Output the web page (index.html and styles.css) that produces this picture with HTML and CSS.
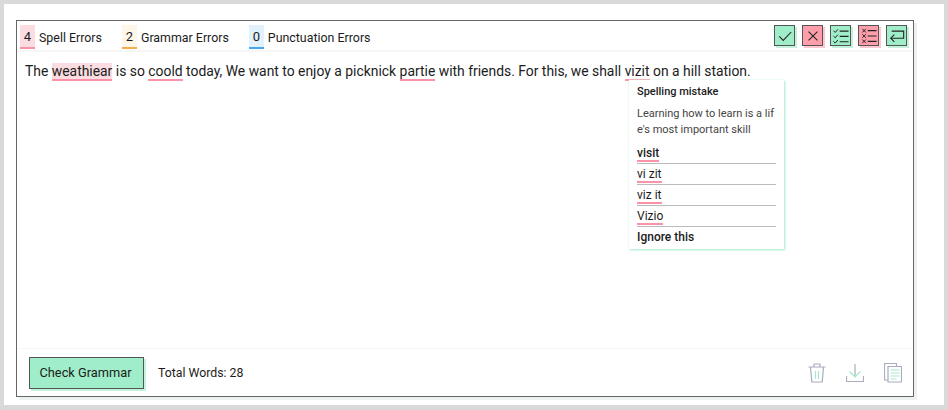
FILE: index.html
```html
<!DOCTYPE html>
<html lang="en">
<head>
<meta charset="utf-8">
<title>Grammar checker</title>
<link rel="stylesheet" href="styles.css">
</head>
<body>
<div class="frame">
  <div class="card">
    <header class="top">
      <div class="stats">
        <div class="stat"><span class="count spell">4</span><span>Spell Errors</span></div>
        <div class="stat"><span class="count grammar">2</span><span>Grammar Errors</span></div>
        <div class="stat"><span class="count punct">0</span><span>Punctuation Errors</span></div>
      </div>
      <div class="tools">
        <button class="tool ok" aria-label="Accept"><svg viewBox="0 0 18 18"><path d="M2.500 9.500l4.500 4.500L16 4.500" fill="none" stroke="#222" stroke-width="1.200"/></svg></button>
        <button class="tool bad" aria-label="Reject"><svg viewBox="0 0 18 18"><path d="M4 4l10 10M14 4L4 14" fill="none" stroke="#222" stroke-width="1.200"/></svg></button>
        <button class="tool ok" aria-label="Accept all"><svg viewBox="0 0 18 18"><path d="M0.500 3l2 2 3-3.500M0.500 9l2 2 3-3.500M0.500 15l2 2 3-3.500" fill="none" stroke="#222" stroke-width="1.100"/><path d="M7.500 3.500h10M7.500 9.500h10M7.500 15.500h10" fill="none" stroke="#222" stroke-width="1.300"/></svg></button>
        <button class="tool bad" aria-label="Reject all"><svg viewBox="0 0 18 18"><path d="M1.500 1l4 4M5.500 1l-4 4M1.500 7l4 4M5.500 7l-4 4M1.500 13l4 4M5.500 13l-4 4" fill="none" stroke="#222" stroke-width="1.100"/><path d="M7.500 3h10M7.500 9h10M7.500 15h10" fill="none" stroke="#222" stroke-width="1.300"/></svg></button>
        <button class="tool ok" aria-label="Undo"><svg viewBox="0 0 18 18"><path d="M3 3.500h13.500v8H2" fill="none" stroke="#222" stroke-width="1.200"/><path d="M6 7.500l-4 4L6 15.500" fill="none" stroke="#222" stroke-width="1.200"/></svg></button>
      </div>
    </header>
    <main class="editor">
      <p class="text">The <span class="err fill">weathiear</span> is so <span class="err">coold</span> today, We want to enjoy a picknick <span class="err">partie</span> with friends. For this, we shall <span class="err">vizit</span> on a hill station.</p>
      <div class="popup">
        <div class="pop-title">Spelling mistake</div>
        <div class="pop-desc">Learning how to learn is a lif<br>e's most important skill</div>
        <div class="opt first"><span class="err">visit</span></div>
        <div class="opt"><span class="err">vi zit</span></div>
        <div class="opt"><span class="err">viz it</span></div>
        <div class="opt"><span class="err">Vizio</span></div>
        <div class="opt ignore">Ignore this</div>
      </div>
    </main>
    <footer class="bottom">
      <button class="check">Check Grammar</button>
      <span class="words">Total Words: 28</span>
      <div class="actions">
        <svg width="18" height="20" viewBox="0 0 18 20" fill="none"><path d="M0.500 4h17M6 4V1h6v3M2.500 4l1.300 15h10.400L15.500 4" stroke="#a9adbd" stroke-width="1.200"/><path d="M7.500 8v8M10.500 8v8" stroke="#a3e9c8" stroke-width="1.200"/></svg>
        <svg width="18" height="20" viewBox="0 0 18 20" fill="none"><path d="M9 1v13" stroke="#a9adbd" stroke-width="1.200"/><path d="M3.500 8.500L9 14l5.500-5.500" stroke="#a3e9c8" stroke-width="1.200"/><path d="M0.500 13v5.500h17V13" stroke="#a9adbd" stroke-width="1.200"/></svg>
        <svg width="18" height="20" viewBox="0 0 18 20" fill="none"><path d="M4 17H.5V.5h12V4" stroke="#a9adbd" stroke-width="1.200"/><path d="M4 3.500h13.500v15.500H4z" stroke="#a9adbd" stroke-width="1.200"/><path d="M6.500 7h9M6.500 10h9M6.500 13h9M6.500 16h6" stroke="#a3e9c8" stroke-width="1.200"/></svg>
      </div>
    </footer>
  </div>
</div>
</body>
</html>
```
FILE: styles.css
```css
* { box-sizing: border-box; }
html, body { margin: 0; height: 100%; }
body { font-family: Roboto, "Liberation Sans", sans-serif; color: #1c1c1c; background: #fff; overflow: hidden; }
.frame { width: 948px; height: 410px; border: 4px solid #d9d9d9; border-bottom-width: 5px; padding: 16px 30px 8px 12px; }
.card { width: 898px; height: 377px; border: 1px solid #666; box-shadow: 3px 3px 0 #eef1f1; display: flex; flex-direction: column; background: #fff; }
.top { height: 31px; display: flex; justify-content: space-between; align-items: flex-start; border-bottom: 2px solid #f6f6f6; padding: 4px 6px 0 3px; flex: none; }
.stats { display: flex; gap: 20px; font-size: 12.400px; }
.stat { display: flex; align-items: center; gap: 4px; height: 24px; }
.count { display: block; width: 15px; height: 24px; line-height: 24px; text-align: center; border-bottom: 2px solid; font-size: 13px; }
.spell { background: #fbdde1; border-color: #fb93a8; }
.grammar { background: #fff6ea; border-color: #f5ad4c; }
.punct { background: #e2f2fd; border-color: #45a8ee; }
.tools { display: flex; gap: 7px; }
.tool { width: 21px; height: 21px; padding: 0; border: 1px solid #555; display: flex; align-items: center; justify-content: center; }
.tool svg { width: 16px; height: 16px; display: block; }
.ok { background: #a0edc9; box-shadow: 2px 2px 0 #c4f3dd; }
.bad { background: #fd9fab; box-shadow: 2px 2px 0 #fdc8d0; }
.editor { position: relative; flex: 1; padding: 9px 8px; }
.text { margin: 0; font-size: 13.900px; line-height: 20px; }
.err { border-bottom: 2px solid #fb93a8; }
.fill { background: #fbdde1; }
.popup { position: absolute; left: 612px; top: 28px; width: 155px; height: 169px; background: #fff; box-shadow: 1px 1px 2px #a8ecc9, 0 0 2px #d5f5e5; padding: 5px 8px; }
.pop-title { font-size: 11px; font-weight: 500; line-height: 14px; }
.pop-desc { font-size: 11px; line-height: 16px; color: #444; margin: 7px 0 6px; }
.opt { font-size: 12px; height: 21px; line-height: 17px; padding-top: 2px; border-top: 1px solid #bbb; }
.opt.first { border-top: 0; font-weight: 500; height: 19px; padding-top: 1px; }
.opt.ignore { font-weight: 500; }
.bottom { flex: none; height: 48px; display: flex; align-items: center; border-top: 1px solid #f6f6f6; padding: 0 11px 0 12px; }
.check { width: 115px; height: 32px; border: 1px solid #555; background: #a0edc9; box-shadow: 2px 2px 0 #c4f3dd; font: 12.800px Roboto, sans-serif; color: #1c1c1c; padding: 0 2px 0 0; }
.words { margin-left: 14px; font-size: 12.300px; }
.actions { margin-left: auto; display: flex; gap: 20px; }
```
